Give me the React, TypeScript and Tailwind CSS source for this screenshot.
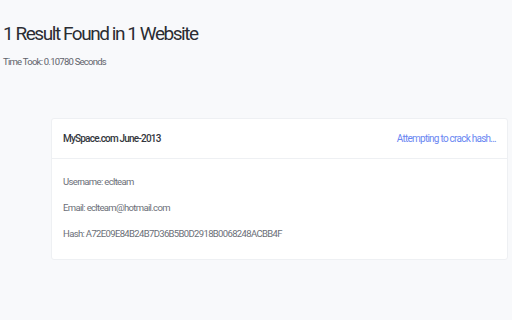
export default function App() {
  const fields = [
    { label: "Username", value: "eclteam" },
    { label: "Email", value: "eclteam@hotmail.com" },
    { label: "Hash", value: "A72E09E84B24B7D36B5B0D2918B0068248ACBB4F" },
  ]

  return (
    <div className="min-h-[320px] w-[512px] bg-[#f8f9fb] font-['Roboto',sans-serif] overflow-hidden">
      {/* Results summary */}
      <div className="pl-[3px] pt-[21px]">
        <h1 className="text-[19px] leading-[26px] text-[#2b2d33] tracking-[-1.45px]">
          1 Result Found in 1 Website
        </h1>
        <p className="mt-[8px] text-[9.5px] leading-[14px] text-[#5f636b] tracking-[-0.75px]">
          Time Took: 0.10780 Seconds
        </p>
      </div>

      {/* Breach card */}
      <div className="ml-[51px] mt-[49px] w-[457px] rounded-[3px] border border-[#eef0f3] bg-white">
        <div className="flex h-[40px] items-center justify-between border-b border-[#eef0f3] px-[11px]">
          <span className="text-[10px] font-medium text-[#33363d] tracking-[-0.8px]">MySpace.com June-2013</span>
          <span className="text-[10px] text-[#6a86f2] tracking-[-0.75px]">Attempting to crack hash...</span>
        </div>
        <div className="flex flex-col gap-[12px] px-[11px] pt-[16px] pb-[18px]">
          {fields.map(f => (
            <p key={f.label} className="text-[9.5px] leading-[14px] text-[#6b6f78] tracking-[-0.65px]">
              {f.label}: {f.value}
            </p>
          ))}
        </div>
      </div>
    </div>
  )
}
